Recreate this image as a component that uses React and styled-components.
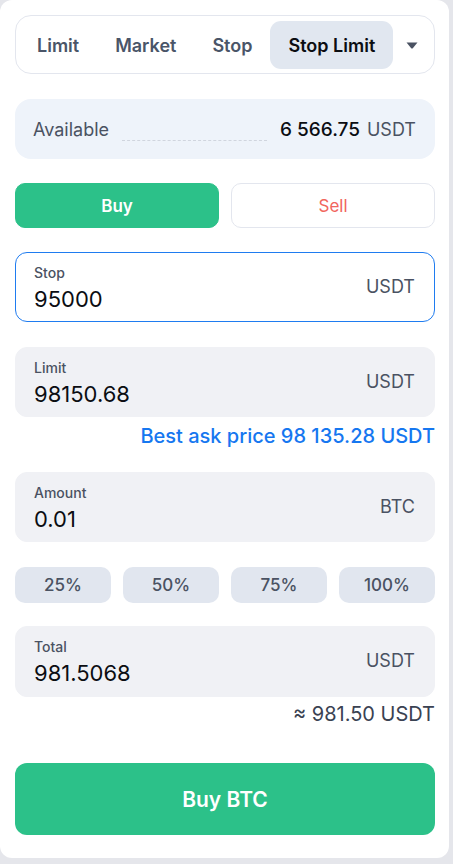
import React from "react";
import styled, { createGlobalStyle } from "styled-components";

const Global = createGlobalStyle`
  html, body { margin: 0; padding: 0; background: #e5e6eb; }
  body { font-family: Inter, "Noto Sans", Arial, sans-serif; -webkit-font-smoothing: antialiased; }
  * { box-sizing: border-box; }
`;

const Card = styled.div`
  width: 449px;
  height: 858px;
  background: #ffffff;
  border-radius: 12px;
  padding: 15px 14px 0 15px;
  display: flex;
  flex-direction: column;
`;

const TabBar = styled.div`
  height: 59px;
  border: 1px solid #e3e6ee;
  border-radius: 16px;
  padding: 5px 4px 4px 3px;
  display: flex;
  align-items: stretch;
`;

const Tab = styled.div`
  padding: 0 18px;
  display: flex;
  align-items: center;
  font-size: 18px;
  font-weight: 600;
  color: ${(p) => (p.$active ? "#0b0d12" : "#4a5568")};
  background: ${(p) => (p.$active ? "#e1e7f0" : "transparent")};
  border-radius: 11px;
  white-space: nowrap;
`;

const Caret = styled.div`
  flex: 1;
  display: flex;
  align-items: center;
  justify-content: center;
`;

const Available = styled.div`
  margin-top: 25px;
  height: 60px;
  background: #eef3fa;
  border-radius: 16px;
  display: flex;
  align-items: center;
  padding: 0 19px 0 18px;
  font-size: 18px;
`;

const AvLabel = styled.span`
  color: #4a5262;
`;

const Dashes = styled.span`
  flex: 1;
  align-self: flex-end;
  margin: 0 13px 18px 13px;
  border-bottom: 1px dashed #d0d5de;
`;

const AvValue = styled.span`
  color: #0b0d12;
  font-size: 19px;
  font-weight: 500;
`;

const AvUnit = styled.span`
  color: #4a5262;
  margin-left: 7px;
`;

const SideRow = styled.div`
  margin-top: 24px;
  display: grid;
  grid-template-columns: 1fr 1fr;
  gap: 12px;
  height: 45px;
`;

const SideBtn = styled.div`
  display: flex;
  align-items: center;
  justify-content: center;
  border-radius: 10px;
  font-size: 17px;
  font-weight: ${(p) => (p.$buy ? 600 : 400)};
  color: ${(p) => (p.$buy ? "#ffffff" : "#f1665d")};
  background: ${(p) => (p.$buy ? "#2cc189" : "#ffffff")};
  border: 1px solid ${(p) => (p.$buy ? "#2cc189" : "#e3e6ee")};
`;

const Field = styled.div`
  margin-top: ${(p) => p.$mt}px;
  height: ${(p) => p.$h || 70}px;
  border-radius: 12px;
  background: ${(p) => (p.$focus ? "#ffffff" : "#f0f1f5")};
  border: 1px solid ${(p) => (p.$focus ? "#1f7cf0" : "#f0f1f5")};
  padding: 11px 19px 0 18px;
  display: flex;
  align-items: flex-start;
`;

const FieldMain = styled.div`
  flex: 1;
  display: flex;
  flex-direction: column;
`;

const FieldLabel = styled.div`
  font-size: 14px;
  line-height: 18px;
  color: #4a5262;
  font-weight: 500;
`;

const FieldValue = styled.div`
  font-size: 22px;
  line-height: 26px;
  margin-top: 4px;
  color: #0b0d12;
`;

const FieldUnit = styled.div`
  font-size: 18px;
  line-height: 22px;
  color: #4a5262;
  margin-top: 12px;
`;

const Note = styled.div`
  text-align: right;
  font-size: ${(p) => p.$size}px;
  line-height: 22px;
  margin-top: ${(p) => p.$mt}px;
  color: ${(p) => p.$color};
  font-weight: ${(p) => p.$weight};
`;

const Percents = styled.div`
  margin-top: 25px;
  display: grid;
  grid-template-columns: repeat(4, 1fr);
  gap: 12px;
  height: 36px;
`;

const Pct = styled.div`
  background: #e1e6ef;
  border-radius: 10px;
  display: flex;
  align-items: center;
  justify-content: center;
  font-size: 17px;
  font-weight: 500;
  color: #4a5262;
`;

const BuyBtn = styled.div`
  margin-top: 38px;
  height: 72px;
  background: #2cc189;
  border-radius: 12px;
  display: flex;
  align-items: center;
  justify-content: center;
  color: #ffffff;
  font-size: 21px;
  font-weight: 600;
`;

const tabs = ["Limit", "Market", "Stop", "Stop Limit"];

function InputField({ label, value, unit, mt, focus, h }) {
  return (
    <Field $mt={mt} $focus={focus} $h={h}>
      <FieldMain>
        <FieldLabel>{label}</FieldLabel>
        <FieldValue>{value}</FieldValue>
      </FieldMain>
      <FieldUnit>{unit}</FieldUnit>
    </Field>
  );
}

export default function App() {
  return (
    <>
      <Global />
      <Card>
        <TabBar>
          {tabs.map((t) => (
            <Tab key={t} $active={t === "Stop Limit"}>
              {t}
            </Tab>
          ))}
          <Caret>
            <svg width="12" height="7" viewBox="0 0 12 7">
              <path d="M0.5 0.5 H11.5 L7 6 Q6 7 5 6 Z" fill="#4a5262" />
            </svg>
          </Caret>
        </TabBar>
        <Available>
          <AvLabel>Available</AvLabel>
          <Dashes />
          <AvValue>6 566.75</AvValue>
          <AvUnit>USDT</AvUnit>
        </Available>
        <SideRow>
          <SideBtn $buy>Buy</SideBtn>
          <SideBtn>Sell</SideBtn>
        </SideRow>
        <InputField label="Stop" value="95000" unit="USDT" mt={24} focus />
        <InputField label="Limit" value="98150.68" unit="USDT" mt={25} />
        <Note $mt={8} $size={20} $weight={500} $color="#1677f0">
          Best ask price 98 135.28 USDT
        </Note>
        <InputField label="Amount" value="0.01" unit="BTC" mt={25} />
        <Percents>
          {["25%", "50%", "75%", "100%"].map((p) => (
            <Pct key={p}>{p}</Pct>
          ))}
        </Percents>
        <InputField label="Total" value="981.5068" unit="USDT" mt={23} h={71} />
        <Note $mt={6} $size={20} $weight={400} $color="#3a4252">
          ≈ 981.50 USDT
        </Note>
        <BuyBtn>Buy BTC</BuyBtn>
      </Card>
    </>
  );
}
